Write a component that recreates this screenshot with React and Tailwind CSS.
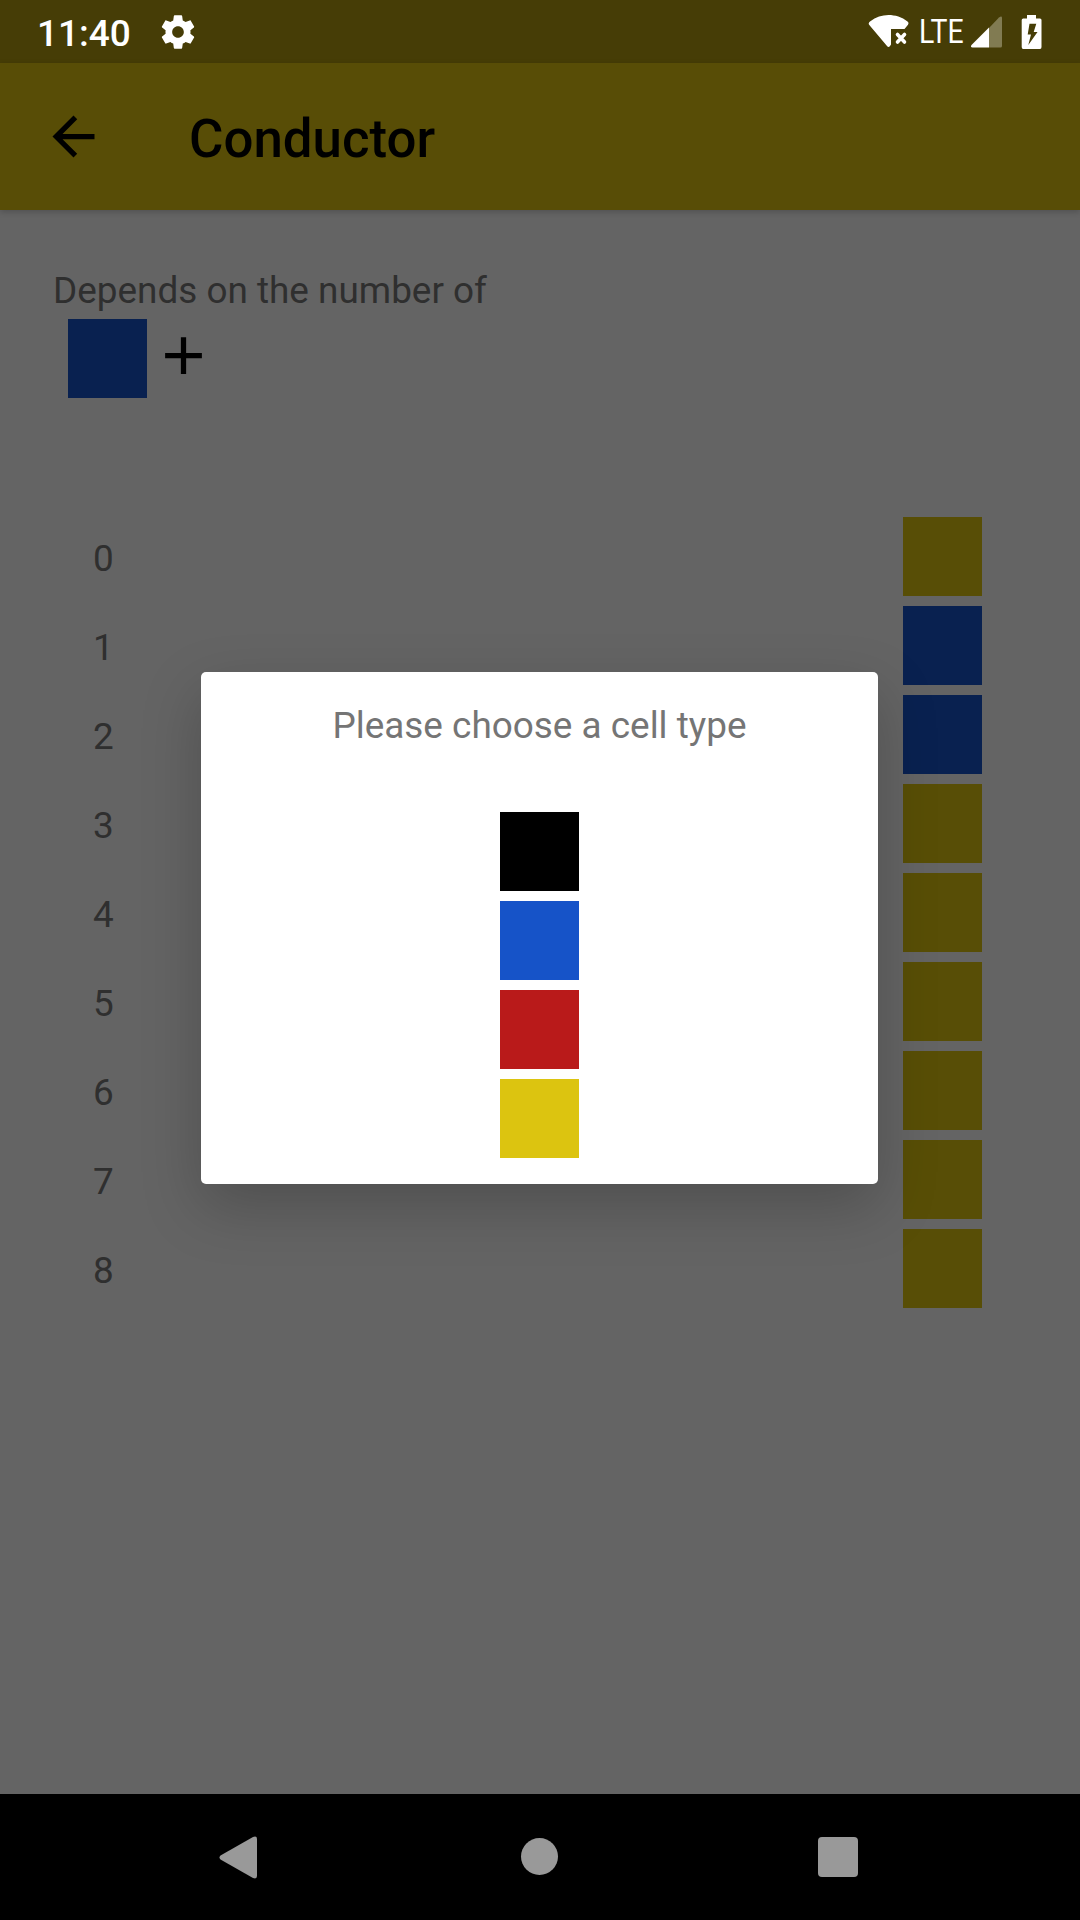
const COLORS = {
  yellowDim: "bg-[#584e06]",
  blueDim: "bg-[#092150]",
};

const ROWS = [
  COLORS.yellowDim,
  COLORS.blueDim,
  COLORS.blueDim,
  COLORS.yellowDim,
  COLORS.yellowDim,
  COLORS.yellowDim,
  COLORS.yellowDim,
  COLORS.yellowDim,
  COLORS.yellowDim,
];

const CHOICES = ["bg-black", "bg-[#1653c8]", "bg-[#b91a1a]", "bg-[#dcc410]"];

function Cell({ color }) {
  return <div className={`size-[79px] shrink-0 ${color}`} />;
}

function StatusBar() {
  return (
    <header className="flex h-[63px] items-center bg-[#463d06] text-white">
      <span className="ml-[37px] mt-[3px] w-[95px] text-[37px] leading-[43px] font-medium">11:40</span>
      <svg className="ml-[26px] size-[40px]" viewBox="0 0 24 24" fill="currentColor">
        <path d="M19.43 12.98c.04-.32.07-.64.07-.98s-.03-.66-.07-.98l2.11-1.65c.19-.15.24-.42.12-.64l-2-3.46c-.12-.22-.39-.3-.61-.22l-2.49 1c-.52-.4-1.08-.73-1.69-.98l-.38-2.65C14.46 2.18 14.25 2 14 2h-4c-.25 0-.46.18-.49.42l-.38 2.65c-.61.25-1.17.59-1.69.98l-2.49-1c-.23-.09-.49 0-.61.22l-2 3.46c-.13.22-.07.49.12.64l2.11 1.65c-.04.32-.07.65-.07.98s.03.66.07.98l-2.11 1.65c-.19.15-.24.42-.12.64l2 3.46c.12.22.39.3.61.22l2.49-1c.52.4 1.08.73 1.69.98l.38 2.65c.03.24.24.42.49.42h4c.25 0 .46-.18.49-.42l.38-2.65c.61-.25 1.17-.59 1.69-.98l2.49 1c.23.09.49 0 .61-.22l2-3.46c.12-.22.07-.49-.12-.64l-2.11-1.65zM12 15.5c-1.93 0-3.5-1.57-3.5-3.5s1.57-3.5 3.5-3.5 3.5 1.57 3.5 3.5-1.57 3.5-3.5 3.5z" />
      </svg>
      <svg className="ml-[670px] h-[34px] w-[42px] shrink-0" viewBox="868 14 42 34">
        <path d="M870 20.500C876 16 882 14 888.500 14S902 16 907.500 20.500Q909.300 22 907.800 24L904.500 28H891V43.500L890 45Q888.500 47 887 45L869.300 24Q867.800 22 870 20.500Z" fill="white" />
        <path d="M897.500 33.500L904.500 41M904.500 33.500L897.500 41" stroke="white" strokeWidth="3.600" strokeLinecap="round" />
      </svg>
      <span className="ml-[9px] w-[51px] origin-left scale-x-[0.86] text-[33px] leading-[38px]">LTE</span>
      <svg className="h-[32px] w-[32px] shrink-0" viewBox="970 15.500 32 32">
        <path d="M989 27.500L999 17Q1002 15 1002 17.500V45.500Q1002 47 1000.500 47H989Z" fill="#817b52" />
        <path d="M989 27V47H972.500Q970 46.500 971.500 44.500Z" fill="white" />
      </svg>
      <svg className="ml-[19px] h-[34px] w-[21px] shrink-0" viewBox="0 0 21 34">
        <path fillRule="evenodd" d="M6 0H15V3.500H19Q20.500 3.500 20.500 5V32Q20.500 34 19 34H2.200Q.7 34 .7 32V5Q.7 3.500 2.200 3.500H6ZM8.500 8.700L6.700 19.500H10L7.300 30L16.500 17H12.700L15.300 8.700Z" fill="white" />
      </svg>
    </header>
  );
}

function AppBar() {
  return (
    <div className="flex h-[147px] items-center bg-[#584d06] shadow-[0_2px_6px_rgba(0,0,0,0.2)]">
      <svg className="ml-[42px] size-[63px]" viewBox="0 0 24 24">
        <path d="M20 11H7.830l5.590-5.590L12 4l-8 8 8 8 1.410-1.410L7.830 13H20v-2z" />
      </svg>
      <h1 className="ml-[84px] mt-[5px] text-[52.8px] leading-[62px] font-medium">Conductor</h1>
    </div>
  );
}

function ChooserDialog() {
  return (
    <div className="absolute inset-x-0 top-[672px] flex justify-center">
      <div className="mr-px flex h-[512px] w-[677px] flex-col items-center rounded-[5px] bg-white shadow-[0_22px_60px_rgba(0,0,0,0.21)]">
        <p className="mt-[32px] text-[36.9px] leading-[43px] text-[#757575]">Please choose a cell type</p>
        <div className="mt-[65px] flex flex-col gap-[10px]">
          {CHOICES.map((color) => (
            <Cell key={color} color={color} />
          ))}
        </div>
      </div>
    </div>
  );
}

function NavBar() {
  return (
    <nav className="flex h-[126px] items-center bg-black">
      <svg className="ml-[219px] h-[43px] w-[39px]" viewBox="0 0 39 43" fill="#999">
        <path d="M1.500 19.500L34 1Q38 -.5 38 3V40Q38 43.500 34 42L1.500 23.500Q-.5 21.500 1.500 19.500Z" />
      </svg>
      <div className="mb-px ml-[263px] size-[37px] rounded-full bg-[#999]" />
      <div className="ml-[260px] size-[40px] rounded-[4px] bg-[#999]" />
    </nav>
  );
}

export default function App() {
  return (
    <div className="relative flex h-[1920px] w-[1080px] flex-col overflow-hidden bg-[#646464] font-['Roboto',sans-serif] text-black">
      <StatusBar />
      <AppBar />
      <main className="flex-1 pt-[59px]">
        <p className="pl-[53px] text-[36.9px] leading-[43px] text-[#2f2f2f]">Depends on the number of</p>
        <div className="mt-[7px] flex pl-[68px]">
          <Cell color={COLORS.blueDim} />
          <svg className="ml-[5px] mt-[5px] size-[63px]" viewBox="0 0 24 24">
            <path d="M19 13h-6v6h-2v-6H5v-2h6V5h2v6h6v2z" />
          </svg>
        </div>
        <div className="mt-[119px] flex flex-col gap-[10px] pr-[98px] pl-[93px]">
          {ROWS.map((color, count) => (
            <div key={count} className="flex items-center justify-between">
              <span className="mt-[3px] text-[36.9px] leading-[43px] text-[#2f2f2f]">{count}</span>
              <Cell color={color} />
            </div>
          ))}
        </div>
      </main>
      <NavBar />
      <ChooserDialog />
    </div>
  );
}
